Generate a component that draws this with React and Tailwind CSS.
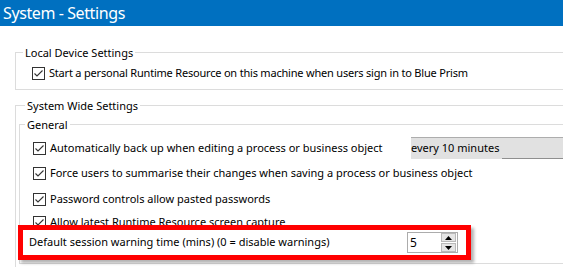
import { useState } from "react";

function Check() {
  return (
    <svg width="13" height="13" viewBox="0 0 13 13" className="shrink-0">
      <rect x="0.5" y="0.5" width="12" height="12" fill="#fff" stroke="#333" />
      <polyline points="2.5,6.5 5,9 10.5,3.5" fill="none" stroke="#333" strokeWidth="1.1" />
    </svg>
  );
}

function Row({ children, className = "" }) {
  return (
    <div className={"flex items-center gap-[4px] h-[16px] ml-[13px] " + className}>
      <Check />
      <span className="whitespace-nowrap leading-[16px]">{children}</span>
    </div>
  );
}

function Spinner({ value, setValue }) {
  return (
    <div className="flex items-center justify-between w-[51px] h-[21px] border border-[#acacac] bg-white pl-[2px] pr-[1px]">
      <span className="leading-[16px] text-[12px]">{value}</span>
      <div className="flex flex-col gap-[1px]">
        <button
          onClick={() => setValue((v) => v + 1)}
          className="w-[15px] h-[9px] bg-[#e5e5e5] border border-[#b9b9b9] flex items-center justify-center"
        >
          <svg width="7" height="4" viewBox="0 0 7 4">
            <polygon points="0,4 3.5,0 7,4" fill="#000" />
          </svg>
        </button>
        <button
          onClick={() => setValue((v) => Math.max(0, v - 1))}
          className="w-[15px] h-[9px] bg-[#e5e5e5] border border-[#b9b9b9] flex items-center justify-center"
        >
          <svg width="7" height="4" viewBox="0 0 7 4">
            <polygon points="0,0 3.5,4 7,0" fill="#000" />
          </svg>
        </button>
      </div>
    </div>
  );
}

export default function App() {
  const [warnTime, setWarnTime] = useState(5);

  return (
    <div className="w-[563px] h-[267px] overflow-hidden bg-white text-black text-[11px] font-['Noto_Sans',sans-serif]">
      <div className="h-[26px] bg-[#0070c0] text-white text-[16px] tracking-[-0.4px] leading-[26px] pl-[3px]">
        System - Settings
      </div>

      <div className="pl-[15px] -mr-[40px]">
        {/* Local Device Settings */}
        <fieldset className="mt-[18px] border border-[#dcdcdc] p-0 pb-[8px]">
          <legend className="ml-[7px] px-[2px] leading-[17px]">Local Device Settings</legend>
          <div className="flex items-center gap-[4px] h-[16px] ml-[16px] mt-[4px]">
            <Check />
            <span className="whitespace-nowrap tracking-[-0.2px]">
              Start a personal Runtime Resource on this machine when users sign in to Blue Prism
            </span>
          </div>
        </fieldset>

        {/* System Wide Settings */}
        <fieldset className="mt-[7px] border border-[#dcdcdc] p-0 pl-[3px] pb-[20px]">
          <legend className="ml-[6px] px-[2px] leading-[17px]">System Wide Settings</legend>

          <fieldset className="mt-[2px] border border-[#dcdcdc] p-0 pb-[3px]">
            <legend className="ml-[5px] px-[2px] leading-[17px]">General</legend>

            <div className="flex items-center h-[22px] ml-[13px] mt-[4px]">
              <div className="flex items-center gap-[4px] w-[378px] shrink-0">
                <Check />
                <span className="whitespace-nowrap">
                  Automatically back up when editing a process or business object
                </span>
              </div>
              <div className="flex-1 h-[22px] flex flex-col bg-[#e1e1e1] border-t border-[#adadad]">
                <span className="flex-1 leading-[20px] whitespace-nowrap">every 10 minutes</span>
                <div className="h-[1px] ml-[91px] bg-[#8f8f8f]" />
              </div>
            </div>

            <Row className="mt-[6px]">
              Force users to summarise their changes when saving a process or business object
            </Row>
            <Row className="mt-[10px]">Password controls allow pasted passwords</Row>
            <Row className="mt-[7px]">Allow latest Runtime Resource screen capture</Row>

            <div className="relative -mt-[5px] -ml-[2px] w-[453px] h-[35px] border-[5px] border-[#ff0000] bg-white shadow-[3px_3px_3px_rgba(0,0,0,0.3)] flex items-center justify-between pl-[6px] pr-[8px]">
              <span className="whitespace-nowrap">
                Default session warning time (mins) (0 = disable warnings)
              </span>
              <Spinner value={warnTime} setValue={setWarnTime} />
            </div>
          </fieldset>
        </fieldset>
      </div>
    </div>
  );
}
